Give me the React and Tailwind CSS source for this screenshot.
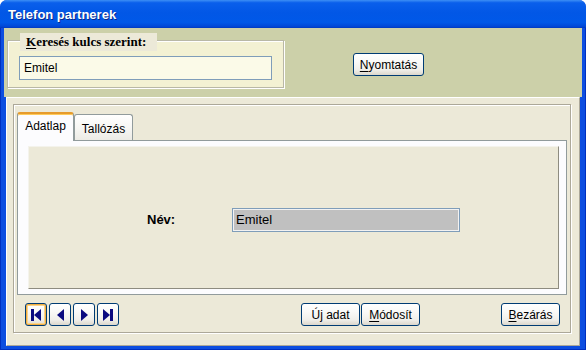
function Btn({ className = "", children }) {
  return (
    <div
      className={
        "flex items-center justify-center rounded-[3px] border border-[#003C74] bg-[linear-gradient(180deg,#FFFFFF_0%,#FAFAF8_35%,#F0EFEA_75%,#DCD7CC_100%)] text-[12px] leading-none text-black " +
        className
      }
    >
      {children}
    </div>
  );
}

function NavBtn({ focused, children }) {
  return (
    <div
      className={
        "w-[22px] h-[23px] flex items-center justify-center rounded-[3px] border border-[#003C74] bg-[linear-gradient(180deg,#FFFFFF_0%,#FAFAF8_35%,#F0EFEA_75%,#DCD7CC_100%)] " +
        (focused ? "shadow-[inset_0_0_0_1px_#F1AE42,inset_0_0_0_2px_#FBD58C]" : "")
      }
    >
      {children}
    </div>
  );
}

export default function App() {
  return (
    <div className="w-[586px] h-[350px] flex flex-col rounded-t-[7px] overflow-hidden bg-[#0A46DA] font-[family-name:'Liberation_Sans',Arial,sans-serif]">
      {/* Title bar */}
      <div className="h-[28px] shrink-0 flex items-center pl-[8px] bg-[linear-gradient(180deg,#3D8FF5_0%,#0A5FEB_10%,#0257E6_45%,#0058E8_80%,#0048D8_94%,#0038C0_100%)]">
        <span className="text-white font-bold text-[13px] leading-none [text-shadow:1px_1px_0_#0B2A8C]">
          Telefon partnerek
        </span>
      </div>

      {/* Window body with blue frame */}
      <div className="flex-1 flex flex-col px-[4px] pb-[4px] bg-[#0D4EE0] shadow-[inset_1px_0_0_#0030C0,inset_-1px_0_0_#0030C0,inset_0_-1px_0_#0030C0]">
        {/* Top search section */}
        <div className="h-[69px] shrink-0 bg-[#CCD0A9] flex items-start pl-[3px] pt-[12px]">
          <div className="relative w-[277px] h-[48px] bg-[#F3F1D3] border border-[#B9B8A6] shadow-[inset_1px_1px_0_#FFFFFF,1px_1px_0_#FFFFFF] pl-[11px] pt-[15px]">
            <div className="absolute left-[12px] top-[-8px] w-[137px] h-[18px] pl-[6px] bg-[#ECE9D8] font-[family-name:'Liberation_Serif','Times_New_Roman',serif] font-bold text-[13px] leading-[18px] text-black">
              <span className="underline underline-offset-2">K</span>eresés kulcs szerint:
            </div>
            <div className="w-[253px] h-[24px] border border-[#7F9DB9] bg-[#FBFAE8] flex items-center pl-[4px] text-[12px] text-black">
              Emitel
            </div>
          </div>
          <Btn className="ml-[69px] mt-[13px] w-[71px] h-[23px]">
            <span className="underline underline-offset-2">N</span>yomtatás
          </Btn>
        </div>

        {/* Lower panel */}
        <div className="flex-1 mx-[2px] bg-[#ECE9D8] border border-t-white border-l-white border-r-[#ACA899] border-b-[#ACA899] pt-[6px] pl-[6px] pr-[8px]">
          <div className="h-[229px] border border-[#ACA899] shadow-[inset_1px_1px_0_#FFFFFF,1px_1px_0_#FFFFFF] px-[3px] pt-[7px] flex flex-col">
            {/* Tabs */}
            <div className="h-[28px] shrink-0 flex items-end relative z-10">
              <div className="w-[57px] h-[29px] mb-[-1px] rounded-t-[3px] border-x border-x-[#919B9C] border-t-[2px] border-t-[#E69B2C] shadow-[inset_0_1px_0_#FFCB5A] bg-[#FCFCFE] flex items-center justify-center pb-[3px] text-[12px] text-black">
                Adatlap
              </div>
              <div className="w-[59px] h-[26px] rounded-t-[3px] border border-b-0 border-[#919B9C] bg-[linear-gradient(180deg,#FFFFFF_0%,#F7F7F4_50%,#ECEBE5_100%)] flex items-center justify-center pt-[2px] text-[12px] text-black">
                Tallózás
              </div>
            </div>
            {/* Tab panel */}
            <div className="h-[155px] shrink-0 flex border border-[#919B9C] bg-[#FCFCFE] pt-[5px] pl-[10px] pr-[7px] pb-[5px]">
              <div className="flex-1 flex items-center pl-[118px] pt-[4px] bg-[#ECE9D8] border border-t-[#F4F3EC] border-l-[#F4F3EC] border-r-[#8E8C80] border-b-[#8E8C80]">
                <div className="w-[85px] font-bold text-[13px] text-black">Név:</div>
                <div className="w-[228px] h-[24px] border border-[#7F9DB9] shadow-[inset_0_0_0_1px_#F2F2F2] bg-[#C0C0C0] flex items-center pl-[3px] text-[13px] text-black">
                  Emitel
                </div>
              </div>
            </div>
            {/* Button row */}
            <div className="mt-[8px] h-[23px] shrink-0 flex items-center pl-[8px] pr-[7px]">
              <div className="flex gap-[2px]">
                <NavBtn focused>
                  <svg width="10" height="12" viewBox="0 0 10 12" fill="#0A0A80">
                    <rect x="0" y="0" width="3" height="12" />
                    <path d="M10 0 L3 6 L10 12 Z" />
                  </svg>
                </NavBtn>
                <NavBtn>
                  <svg width="7" height="12" viewBox="0 0 7 12" fill="#0A0A80">
                    <path d="M7 0 L0 6 L7 12 Z" />
                  </svg>
                </NavBtn>
                <NavBtn>
                  <svg width="7" height="12" viewBox="0 0 7 12" fill="#0A0A80">
                    <path d="M0 0 L7 6 L0 12 Z" />
                  </svg>
                </NavBtn>
                <NavBtn>
                  <svg width="10" height="12" viewBox="0 0 10 12" fill="#0A0A80">
                    <path d="M0 0 L7 6 L0 12 Z" />
                    <rect x="7" y="0" width="3" height="12" />
                  </svg>
                </NavBtn>
              </div>
              <div className="ml-[182px] flex gap-[1px]">
                <Btn className="w-[59px] h-[23px]">
                  Ú<span className="underline underline-offset-2">j</span>&nbsp;adat
                </Btn>
                <Btn className="w-[59px] h-[23px]">
                  <span className="underline underline-offset-2">M</span>ódosít
                </Btn>
              </div>
              <Btn className="ml-auto w-[59px] h-[23px]">
                <span className="underline underline-offset-2">B</span>ezárás
              </Btn>
            </div>
          </div>
        </div>
      </div>
    </div>
  );
}
